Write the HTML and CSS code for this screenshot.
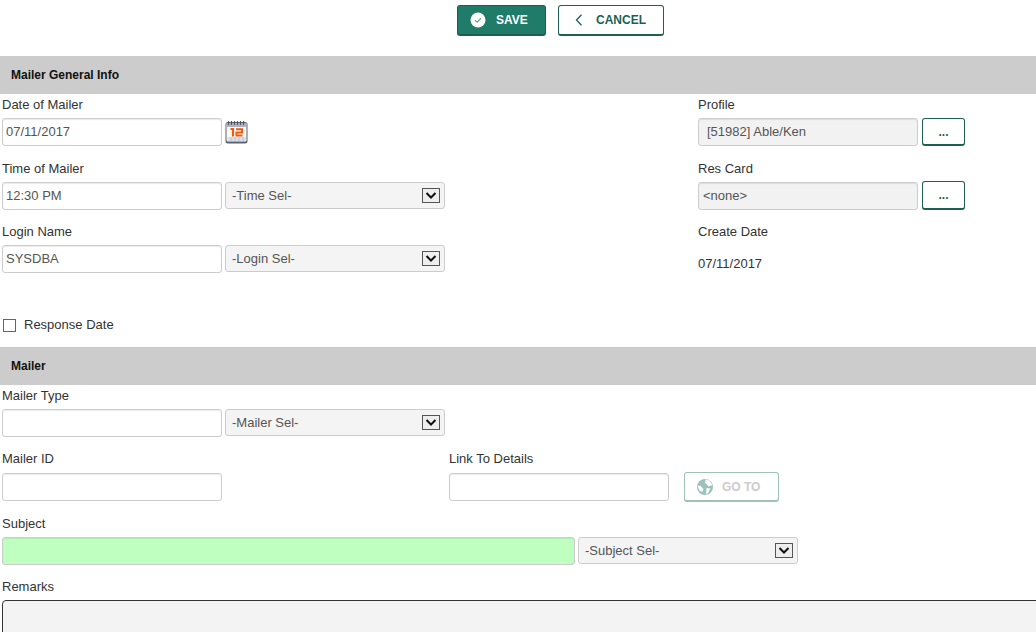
FILE: index.html
```html
<!DOCTYPE html>
<html lang="en">
<head>
    <meta charset="UTF-8">
    <title>Mailer</title>
    <link rel="stylesheet" href="styles.css">
</head>
<body>

    <div class="toolbar">
        <button class="btn btn-save" type="button">
            <svg width="16" height="16" viewBox="0 0 16 16">
                <circle cx="8" cy="8" r="7.5" fill="#fff"/>
                <path d="M5 8.3 L7.2 10.2 L11 6.2" fill="none" stroke="#6f9c92" stroke-width="1.2"/>
            </svg>
            SAVE
        </button>
        <button class="btn btn-cancel" type="button">
            <svg width="8" height="12" viewBox="0 0 8 12">
                <path d="M6.5 0.8 L1.5 6 L6.5 11.2" fill="none" stroke="#1f5f52" stroke-width="1.3"/>
            </svg>
            CANCEL
        </button>
    </div>

    <div class="section-head">Mailer General Info</div>

    <div class="general">
        <div class="col-left">
            <div class="field">
                <label class="lbl">Date of Mailer</label>
                <div class="line">
                    <input class="txt" type="text" value="07/11/2017">
                    <!-- kalendarz -->
                    <svg class="cal" width="24" height="24" viewBox="0 0 24 24">
                        <rect x="0.5" y="2" width="22" height="21.5" rx="2.5" fill="#5d6270"/>
                        <rect x="1.5" y="3" width="20" height="18.5" rx="1.5" fill="#fbf8f0"/>
                        <rect x="1.5" y="3" width="20" height="4" fill="#aeb2c0"/>
                        <path d="M3.5 1 V5 M6.5 1 V5 M9.5 1 V5 M12.5 1 V5 M15.5 1 V5 M18.5 1 V5" stroke="#555" stroke-width="1.1"/>
                        <path d="M5.5 9 H8 V16.5" fill="none" stroke="#ee5a12" stroke-width="2.2"/>
                        <path d="M11 9.2 H17 V12.6 H11.5 V15.6 H17.5" fill="none" stroke="#ee5a12" stroke-width="2"/>
                        <path d="M2.5 18 H20.5 M2.5 20 H20.5 M6 17 V21 M10 17 V21 M14 17 V21 M18 17 V21" stroke="#b4c0dc" stroke-width="0.9"/>
                    </svg>
                </div>
            </div>
            <div class="field">
                <label class="lbl">Time of Mailer</label>
                <div class="line">
                    <input class="txt" type="text" value="12:30 PM">
                    <div class="sel"><span>-Time Sel-</span><i class="sel-arrow"><svg width="12" height="7" viewBox="0 0 12 7"><path d="M1.5 1 L6 5.5 L10.5 1" fill="none" stroke="#111" stroke-width="2"/></svg></i></div>
                </div>
            </div>
            <div class="field field-tight">
                <label class="lbl">Login Name</label>
                <div class="line">
                    <input class="txt" type="text" value="SYSDBA">
                    <div class="sel"><span>-Login Sel-</span><i class="sel-arrow"><svg width="12" height="7" viewBox="0 0 12 7"><path d="M1.5 1 L6 5.5 L10.5 1" fill="none" stroke="#111" stroke-width="2"/></svg></i></div>
                </div>
            </div>
        </div>
        <div class="col-right">
            <div class="field">
                <label class="lbl">Profile</label>
                <div class="line line-right">
                    <input class="txt txt-ro txt-profile" type="text" value="[51982] Able/Ken" readonly>
                    <button class="btn-dots" type="button">...</button>
                </div>
            </div>
            <div class="field">
                <label class="lbl">Res Card</label>
                <div class="line line-right">
                    <input class="txt txt-ro" type="text" value="<none>" readonly>
                    <button class="btn-dots btn-dots-tall" type="button">...</button>
                </div>
            </div>
            <div class="field field-tight">
                <label class="lbl">Create Date</label>
                <div class="plain-value">07/11/2017</div>
            </div>
        </div>
    </div>

    <div class="check-row">
        <input class="chk" type="checkbox" id="response-date">
        <label for="response-date">Response Date</label>
    </div>

    <div class="section-head">Mailer</div>

    <div class="mailer">
        <div class="field">
            <label class="lbl">Mailer Type</label>
            <div class="line">
                <input class="txt" type="text">
                <div class="sel"><span>-Mailer Sel-</span><i class="sel-arrow"><svg width="12" height="7" viewBox="0 0 12 7"><path d="M1.5 1 L6 5.5 L10.5 1" fill="none" stroke="#111" stroke-width="2"/></svg></i></div>
            </div>
        </div>
        <div class="two-fields">
            <div class="field field-id">
                <label class="lbl lbl-up">Mailer ID</label>
                <div class="line">
                    <input class="txt" type="text">
                </div>
            </div>
            <div class="field">
                <label class="lbl lbl-up">Link To Details</label>
                <div class="line">
                    <input class="txt" type="text">
                    <button class="btn-goto" type="button">
                        <svg width="16" height="16" viewBox="0 0 16 16">
                            <circle cx="8" cy="8" r="8" fill="#9cc2b9"/>
                            <path d="M8.5 0.5 L12.5 1.5 L15.5 6 L11.5 7.5 L10 5.5 L8 4 Z M9.5 9 L13.5 9.5 L11 14 L9 15.5 Z M0.5 6.5 L3.5 7 L6.5 10 L5.5 13 L2.5 11.5 Z" fill="#fff"/>
                        </svg>
                        GO TO
                    </button>
                </div>
            </div>
        </div>
        <div class="field">
            <label class="lbl">Subject</label>
            <div class="line">
                <input class="txt txt-subject" type="text">
                <div class="sel"><span>-Subject Sel-</span><i class="sel-arrow"><svg width="12" height="7" viewBox="0 0 12 7"><path d="M1.5 1 L6 5.5 L10.5 1" fill="none" stroke="#111" stroke-width="2"/></svg></i></div>
            </div>
        </div>
        <div class="field field-tight">
            <label class="lbl">Remarks</label>
            <textarea class="remarks"></textarea>
        </div>
    </div>

</body>
</html>
```

FILE: styles.css
```css
html, body {
    margin: 0;
    height: 632px;
    overflow: hidden;
}
body {
    font-family: "Liberation Sans", Arial, sans-serif;
    font-size: 13px;
    color: #333;
    background-color: #fff;
}
.toolbar {
    height: 56px;
    box-sizing: border-box;
    padding: 5px 0 0 457px;
    display: flex;
    align-items: flex-start;
    gap: 12px;
}
.btn {
    height: 31px;
    box-sizing: border-box;
    border-radius: 3px;
    font-family: inherit;
    font-size: 12px;
    font-weight: bold;
    display: flex;
    align-items: center;
    padding: 0;
}
.btn-save {
    width: 89px;
    padding-left: 12px;
    gap: 10px;
    background-color: #217b69;
    border: 1px solid #1c5f52;
    border-bottom-width: 2px;
    color: #fff;
}
.btn-cancel {
    width: 106px;
    padding-left: 16px;
    gap: 13px;
    background-color: #fff;
    border: 1px solid #1f5f52;
    border-bottom-width: 2px;
    color: #1f5f52;
}
.section-head {
    height: 38px;
    line-height: 38px;
    padding-left: 11px;
    background-color: #ccc;
    font-size: 12px;
    font-weight: bold;
    color: #111;
}
.general {
    display: flex;
    height: 191px;
}
.col-left {
    width: 698px;
    padding-left: 2px;
    box-sizing: border-box;
}
.field {
    margin-bottom: 12px;
}
.field-tight {
    margin-top: -1px;
}
.lbl {
    display: block;
    height: 20px;
    line-height: 21px;
    margin-bottom: 4px;
}
.lbl-up {
    line-height: 19px;
}
.line {
    display: flex;
    align-items: center;
    gap: 3px;
}
.line-right {
    gap: 4px;
}
.txt {
    width: 220px;
    height: 28px;
    box-sizing: border-box;
    border: 1px solid #ccc;
    border-radius: 3px;
    padding: 0 3px 2px;
    font-family: inherit;
    font-size: 13px;
    color: #555;
    background-color: #fff;
    box-shadow: inset 0 1px 1px rgba(0,0,0,0.08);
}
.txt-ro {
    background-color: #f2f2f2;
    padding-left: 4px;
}
.txt-profile {
    padding-left: 8px;
}
.txt-subject {
    width: 573px;
    background-color: #bfffbf;
}
.sel {
    width: 220px;
    height: 27px;
    align-self: flex-start;
    box-sizing: border-box;
    border: 1px solid #ccc;
    border-radius: 3px;
    background-color: #f4f4f4;
    padding: 0 4px 0 6px;
    font-size: 13px;
    color: #555;
    display: flex;
    align-items: center;
    justify-content: space-between;
}
.sel-arrow {
    width: 18px;
    height: 15px;
    box-sizing: border-box;
    border: 1px solid #555;
    background-color: #eee;
    display: flex;
    align-items: center;
    justify-content: center;
}
.btn-dots {
    width: 43px;
    height: 28px;
    box-sizing: border-box;
    background-color: #fff;
    border: 1px solid #1f5f52;
    border-bottom-width: 2px;
    border-radius: 3px;
    font-family: inherit;
    font-size: 12px;
    font-weight: bold;
    color: #1f5f52;
    padding: 0;
}
.btn-dots-tall {
    height: 29px;
    margin-top: -1px;
}
.plain-value {
    margin-top: 12px;
    line-height: 21px;
}
.check-row {
    height: 62px;
    box-sizing: border-box;
    padding: 34px 0 0 3px;
    display: flex;
    align-items: flex-start;
    gap: 8px;
    line-height: 11px;
}
.chk {
    width: 13px;
    height: 13px;
    margin: 0;
    appearance: none;
    background-color: #fff;
    border: 1px solid #666;
}
.mailer {
    padding-left: 2px;
}
.two-fields {
    display: flex;
}
.field-id {
    width: 447px;
}
.btn-goto {
    width: 95px;
    height: 30px;
    box-sizing: border-box;
    margin: -1px 0 -1px 12px;
    padding: 0 0 0 12px;
    display: flex;
    align-items: center;
    gap: 9px;
    background-color: #fff;
    border: 1px solid #9cc2b9;
    border-bottom-width: 2px;
    border-radius: 3px;
    font-family: inherit;
    font-size: 12px;
    font-weight: bold;
    color: #ccc;
}
.remarks {
    display: block;
    width: 1060px;
    height: 90px;
    box-sizing: border-box;
    border: 1px solid #333;
    border-radius: 4px;
    background-color: #f3f3f3;
}
```
